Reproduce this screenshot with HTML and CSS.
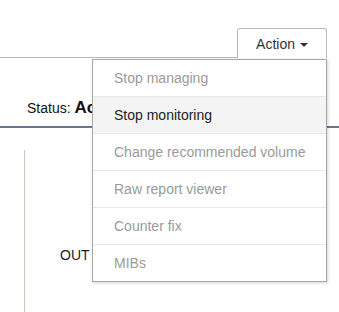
FILE: index.html
```html
<!DOCTYPE html>
<html>
<head lang="en">
    <meta charset="UTF-8">
    <title>Device</title>
    <link rel="stylesheet" href="styles.css">
</head>
<body>
<div class="page">
    <div class="toolbar">
        <div class="rule"></div>
        <div class="tab">Action <span class="caret"></span></div>
        <div class="gap"></div>
    </div>
    <div class="status">
        <span class="label">Status:</span> <b class="value">Active</b>
    </div>
    <div class="content">
        <div class="col">
            <div class="out">OUT</div>
        </div>
    </div>

    <!-- menu lies over the page -->
    <ul class="menu">
        <li class="off">Stop managing</li>
        <li class="hover">Stop monitoring</li>
        <li class="off">Change recommended volume</li>
        <li class="off">Raw report viewer</li>
        <li class="off">Counter fix</li>
        <li class="off">MIBs</li>
    </ul>
</div>
</body>
</html>
```

FILE: styles.css
```css
* {
    margin: 0;
    padding: 0;
}

body {
    font-family: "Liberation Sans", Arial, sans-serif;
    font-size: 14px;
    color: #222;
    background: #fff;
    overflow: hidden;
}

ul {
    list-style: none;
}

.page {
    position: relative;
    width: 339px;
    height: 312px;
    overflow: hidden;
}

.toolbar {
    display: flex;
    align-items: flex-end;
    padding-top: 28px;
}

.rule {
    flex: 1;
    border-bottom: 1px solid #b8b8b8;
}

.tab {
    width: 88px;
    height: 29px;
    border: 1px solid #b8b8b8;
    border-bottom: none;
    border-radius: 3px 3px 0 0;
    text-align: center;
    line-height: 30px;
    color: #333;
    background: #fff;
}

.caret {
    display: inline-block;
    width: 0;
    height: 0;
    margin-left: 1px;
    vertical-align: middle;
    border-top: 4px solid #333;
    border-left: 4px solid transparent;
    border-right: 4px solid transparent;
}

.gap {
    width: 12px;
}

.status {
    height: 70px;
    padding-left: 27px;
    box-sizing: border-box;
    padding-top: 40px;
    border-bottom: 2px solid #66768f;
    white-space: nowrap;
}

.label {
    font-size: 14px;
    color: #111;
}

.value {
    font-size: 17px;
    color: #111;
}

.content {
    padding: 22px 0 0 24px;
}

.col {
    height: 170px;
    box-sizing: border-box;
    border-left: 1px solid #c9c9b6;
    padding: 97px 0 0 35px;
}

.out {
    color: #1a1a2a;
}

.menu {
    position: absolute;
    top: 59px;
    right: 12px;
    width: 233px;
    background: #fff;
    border: 1px solid #a8a8a0;
    box-shadow: 1px 1px 3px rgba(0, 0, 0, 0.18);
}

.menu li {
    height: 36px;
    line-height: 36px;
    padding-left: 21px;
    border-top: 1px solid #e8e8e8;
    white-space: nowrap;
}

.menu li:first-child {
    border-top: none;
}

.menu .off {
    color: #9a9a9a;
}

.menu .hover {
    background: #f4f4f4;
    color: #222;
}
```
